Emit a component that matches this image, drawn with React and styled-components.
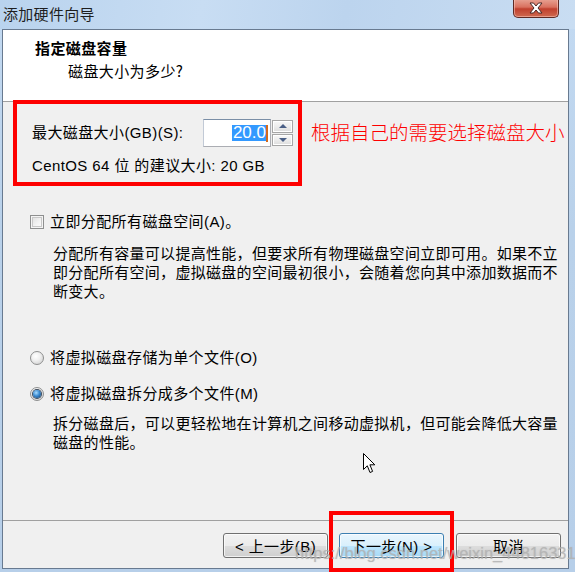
import React from "react"
import styled, { createGlobalStyle } from "styled-components"

const GlobalStyle = createGlobalStyle`
  html, body {
    margin: 0;
    padding: 0;
    background: #b9d1ea;
  }
  body {
    font-family: "Liberation Sans", "Noto Sans CJK SC", sans-serif;
    font-size: 15px;
    color: #000;
  }
  * {
    box-sizing: border-box;
  }
`

const Window = styled.div`
  position: relative;
  width: 575px;
  height: 572px;
  display: flex;
  flex-direction: column;
  background: linear-gradient(to bottom, #c3daf2 0%, #b9d1ea 40%, #b7cfe9 100%);
  overflow: hidden;
`

const TitleBar = styled.div`
  height: 29px;
  flex: 0 0 29px;
  display: flex;
  align-items: flex-start;
  padding-left: 3px;
  background: linear-gradient(100deg, #b9d3ee 0%, #c8ddf3 35%, #bcd4ee 60%, #c9ddf2 100%);
`

const Title = styled.span`
  font-family: "Noto Sans CJK SC", sans-serif;
  font-size: 15px;
  line-height: 27px;
  letter-spacing: 0.3px;
  color: #1e1e1e;
`

const CloseButton = styled.div`
  margin-left: auto;
  margin-right: 16px;
  width: 46px;
  height: 19px;
  margin-top: -1px;
  border: 1px solid #5e2a24;
  border-top: none;
  border-radius: 0 0 5px 5px;
  background: linear-gradient(to bottom, #e8a495 0%, #d9715f 45%, #c0402e 55%, #cf6a50 100%);
  box-shadow: inset 0 0 0 1px rgba(255, 210, 200, 0.5);
  display: flex;
  align-items: center;
  justify-content: center;
`

const Frame = styled.div`
  flex: 1;
  display: flex;
  padding: 0 6px 3px 2px;
`

const Client = styled.div`
  flex: 1;
  display: flex;
  flex-direction: column;
  border: 1px solid #687a90;
  background: #f0f0f0;
`

const Header = styled.div`
  height: 72px;
  flex: 0 0 72px;
  background: #fff;
  border-bottom: 1px solid #a0a0a0;
  padding: 8px 0 0 32px;
`

const HeaderTitle = styled.div`
  font-family: "Noto Sans CJK SC", sans-serif;
  font-weight: bold;
  font-size: 15px;
  line-height: 20px;
  letter-spacing: 0.4px;
`

const HeaderSub = styled.div`
  font-family: "Noto Sans CJK SC", sans-serif;
  font-size: 15px;
  line-height: 20px;
  margin: 3px 0 0 33px;
  letter-spacing: 0.4px;
`

const Body = styled.div`
  flex: 1;
  display: flex;
  flex-direction: column;
`

const SizeRow = styled.div`
  display: flex;
  align-items: flex-start;
  margin: -2px 0 0 10px;
`

const SizeBox = styled.div`
  width: 289px;
  height: 86px;
  border: 4px solid #fe0000;
  padding: 15px 0 0 15px;
`

const FieldRow = styled.div`
  display: flex;
  align-items: center;
  height: 28px;
`

const Text = styled.span`
  font-size: 15px;
  line-height: 20px;
  letter-spacing: 0.4px;
  white-space: nowrap;
`

const FieldLabel = styled(Text)`
  width: 171px;
`

const Input = styled.div`
  width: 68px;
  height: 28px;
  border: 1px solid #abadb3;
  border-top-color: #7a8ea6;
  border-left-color: #c2cad6;
  background: #fff;
  display: flex;
  align-items: center;
  justify-content: flex-end;
  padding-right: 2px;
`

const Selected = styled.span`
  background: #3399ff;
  color: #fff;
  font-size: 17px;
  line-height: 16px;
  padding: 0 0 0 1px;
`

const Caret = styled.span`
  width: 2px;
  height: 17px;
  background: #d2691e;
`

const Spinner = styled.div`
  margin-left: 1px;
  width: 21px;
  height: 26px;
  display: flex;
  flex-direction: column;
  gap: 1px;
`

const SpinButton = styled.div`
  flex: 1;
  border: 1px solid #a6a6a6;
  background: linear-gradient(to bottom, #f8f8f8 0%, #ececec 50%, #dcdcdc 100%);
  box-shadow: inset 0 0 0 1px #fff;
  display: flex;
  align-items: center;
  justify-content: center;
`

const Arrow = styled.span`
  width: 0;
  height: 0;
  border-left: 4px solid transparent;
  border-right: 4px solid transparent;
  ${(p) =>
    p.$down
      ? "border-top: 4px solid #4a5f86;"
      : "border-bottom: 4px solid #4a5f86;"}
`

const Recommend = styled(Text)`
  display: block;
  margin-top: 9px;
`

const Hint = styled.span`
  font-family: "Noto Sans CJK SC", sans-serif;
  font-size: 19.5px;
  font-weight: 300;
  line-height: 26px;
  color: #fe0000;
  margin: 19px 0 0 9px;
  white-space: nowrap;
`

const OptionRow = styled.div`
  display: flex;
  align-items: center;
  height: 20px;
  gap: 6px;
  margin: ${(p) => p.$top}px 0 0 27px;
`

const CheckBox = styled.span`
  width: 14px;
  height: 14px;
  border: 1px solid #8e8f8f;
  background: linear-gradient(135deg, #dcdcdc 0%, #f4f4f4 60%, #fdfdfd 100%);
  box-shadow: inset 0 0 0 1px #f4f4f4, inset 0 0 0 2px #c8c8c8;
`

const Radio = styled.span`
  width: 14px;
  height: 14px;
  border-radius: 50%;
  border: 1px solid #8e8f8f;
  background: radial-gradient(circle at 40% 35%, #ffffff 0%, #f0f0f0 40%, #c9c9c9 100%);
  display: flex;
  align-items: center;
  justify-content: center;
`

const RadioDot = styled.span`
  width: 8px;
  height: 8px;
  border-radius: 50%;
  background: radial-gradient(circle at 40% 35%, #a8dcff 0%, #3a8ad0 45%, #133b6a 100%);
  box-shadow: 0 0 0 1px #3b4a5c;
`

const Desc = styled.p`
  margin: ${(p) => p.$top}px 0 0 50px;
  width: 512px;
  font-size: 15px;
  line-height: 19px;
  letter-spacing: 0.3px;
`

const Footer = styled.div`
  position: relative;
  height: 48px;
  flex: 0 0 48px;
  border-top: 1px solid #a0a0a0;
  display: flex;
  justify-content: flex-end;
  align-items: flex-start;
  gap: 11px;
  padding: 12px 7px 0 0;
`

const Button = styled.div`
  position: relative;
  width: 105px;
  height: 25px;
  border: 1px solid ${(p) => (p.$primary ? "#3c7fb1" : "#707070")};
  border-radius: 3px;
  background: ${(p) =>
    p.$primary
      ? "linear-gradient(to bottom, #eaf6fd 0%, #d9f0fc 50%, #bee6fd 51%, #a7d9f5 100%)"
      : "linear-gradient(to bottom, #f2f2f2 0%, #ebebeb 50%, #dddddd 51%, #cfcfcf 100%)"};
  box-shadow: inset 0 0 0 1px rgba(255, 255, 255, 0.7);
  display: flex;
  align-items: center;
  justify-content: center;
  font-size: 15px;
  letter-spacing: 0.4px;
  margin-left: ${(p) => p.$gap || 0}px;
`

const Highlight = styled.div`
  position: absolute;
  left: -11px;
  right: -11px;
  top: -23px;
  bottom: -15px;
  border: 4px solid #fe0000;
  pointer-events: none;
`

const Watermark = styled.div`
  position: absolute;
  left: 295px;
  top: 542px;
  font-family: "Liberation Sans", sans-serif;
  font-size: 16.5px;
  line-height: 22px;
  color: rgba(180, 180, 180, 0.75);
  text-shadow: 0 0 1px rgba(140, 140, 140, 0.4);
  white-space: nowrap;
  pointer-events: none;
`

const Cursor = styled.svg`
  position: absolute;
  left: 363px;
  top: 453px;
`

export default function App() {
  return (
    <>
      <GlobalStyle />
      <Window>
        <TitleBar>
          <Title>添加硬件向导</Title>
          <CloseButton>
            <svg width="16" height="12" viewBox="0 0 16 12">
              <path
                d="M2 1 L5.5 1 L8 4 L10.5 1 L14 1 L10 6 L14 11 L10.5 11 L8 8 L5.5 11 L2 11 L6 6 Z"
                fill="#fff"
                stroke="#4a2a28"
                strokeWidth="1"
              />
            </svg>
          </CloseButton>
        </TitleBar>
        <Frame>
          <Client>
            <Header>
              <HeaderTitle>指定磁盘容量</HeaderTitle>
              <HeaderSub>磁盘大小为多少?</HeaderSub>
            </Header>
            <Body>
              <SizeRow>
                <SizeBox>
                  <FieldRow>
                    <FieldLabel>最大磁盘大小(GB)(S):</FieldLabel>
                    <Input>
                      <Selected>20.0</Selected>
                      <Caret />
                    </Input>
                    <Spinner>
                      <SpinButton>
                        <Arrow />
                      </SpinButton>
                      <SpinButton>
                        <Arrow $down />
                      </SpinButton>
                    </Spinner>
                  </FieldRow>
                  <Recommend>CentOS 64 位 的建议大小: 20 GB</Recommend>
                </SizeBox>
                <Hint>根据自己的需要选择磁盘大小</Hint>
              </SizeRow>

              <OptionRow $top={26}>
                <CheckBox />
                <Text>立即分配所有磁盘空间(A)。</Text>
              </OptionRow>
              <Desc $top={12}>
                分配所有容量可以提高性能，但要求所有物理磁盘空间立即可用。如果不立即分配所有空间，虚拟磁盘的空间最初很小，会随着您向其中添加数据而不断变大。
              </Desc>

              <OptionRow $top={47}>
                <Radio />
                <Text>将虚拟磁盘存储为单个文件(O)</Text>
              </OptionRow>
              <OptionRow $top={16}>
                <Radio>
                  <RadioDot />
                </Radio>
                <Text>将虚拟磁盘拆分成多个文件(M)</Text>
              </OptionRow>
              <Desc $top={10}>
                拆分磁盘后，可以更轻松地在计算机之间移动虚拟机，但可能会降低大容量磁盘的性能。
              </Desc>
            </Body>
            <Footer>
              <Button>&lt; 上一步(B)</Button>
              <Button $primary>
                下一步(N) &gt;
                <Highlight />
              </Button>
              <Button $gap={1}>取消</Button>
            </Footer>
          </Client>
        </Frame>
        <Cursor width="13" height="21" viewBox="0 0 13 21">
          <path
            d="M0.5 0.5 L0.5 16.5 L4.3 12.8 L7 19.5 L9.6 18.4 L6.9 11.8 L11.8 11.8 Z"
            fill="#fff"
            stroke="#000"
            strokeWidth="1"
            strokeLinejoin="miter"
          />
        </Cursor>
        <Watermark>https://blog.csdn.net/weixin_44816331</Watermark>
      </Window>
    </>
  )
}
